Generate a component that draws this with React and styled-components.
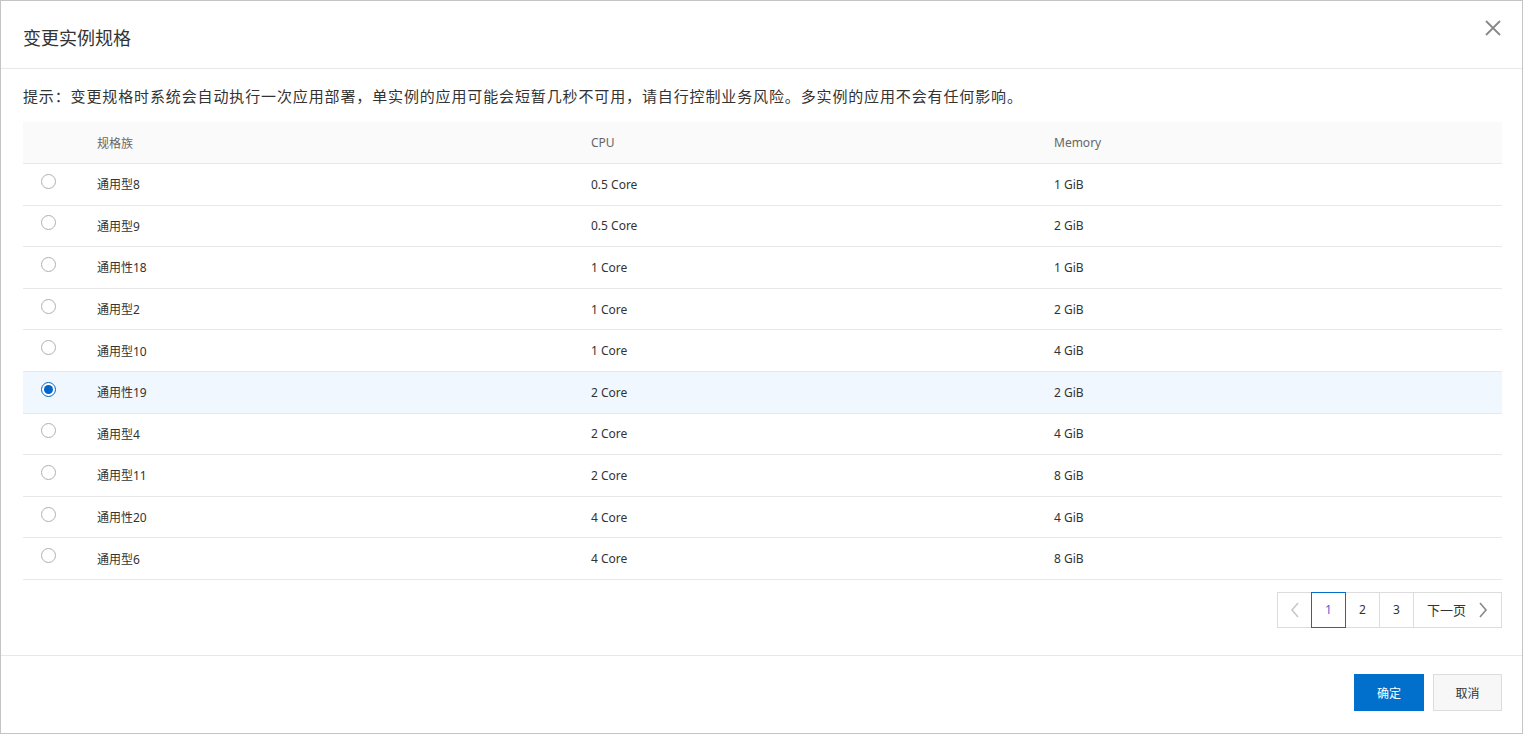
import React, { useState } from "react";
import styled, { createGlobalStyle } from "styled-components";

const Global = createGlobalStyle`
  html, body { margin: 0; padding: 0; background: #fff; }
  body { font-family: "Noto Sans", "Open Sans", "Noto Sans CJK SC", sans-serif; color: #333; }
  * { box-sizing: border-box; }
`;

const Dialog = styled.div`
  width: 1523px;
  height: 734px;
  border: 1px solid #c4c4c4;
  display: flex;
  flex-direction: column;
  background: #fff;
`;

const Header = styled.div`
  height: 68px;
  flex: none;
  display: flex;
  align-items: center;
  justify-content: space-between;
  padding: 0 20px 0 22px;
  border-bottom: 1px solid #e8e8e8;
`;

const Title = styled.h2`
  margin: 0;
  font-size: 18px;
  font-weight: 400;
  color: #333;
  font-family: "Noto Sans CJK SC", sans-serif;
  line-height: 24px;
  padding-top: 4px;
`;

const Close = styled.button`
  border: none;
  background: none;
  padding: 0;
  width: 20px;
  height: 20px;
  display: flex;
  align-items: center;
  justify-content: center;
  cursor: pointer;
  margin-top: -14px;
  margin-right: -1px;
`;

const Body = styled.div`
  flex: 1;
  padding: 0 20px 0 22px;
  display: flex;
  flex-direction: column;
`;

const Hint = styled.p`
  margin: 0;
  height: 53px;
  display: flex;
  align-items: center;
  font-family: "Noto Sans CJK SC", sans-serif;
  font-size: 15px;
  letter-spacing: 0.87px;
  color: #333;
`;

const Table = styled.div`
  display: flex;
  flex-direction: column;
`;

const Row = styled.div`
  display: grid;
  grid-template-columns: 58px 494px 463px 1fr;
  align-items: center;
  height: ${(p) => (p.$head ? "42px" : "41.6px")};
  border-bottom: 1px solid #e8e8e8;
  background: ${(p) => (p.$head ? "#fafafa" : p.$selected ? "#f0f7fe" : "#fff")};
`;

const Cell = styled.div`
  padding-left: ${(p) => (p.$radio ? "18px" : "16px")};
  font-size: 12px;
  color: ${(p) => (p.$head ? "#666" : "#333")};
  font-family: "Noto Sans", "Noto Sans CJK SC", sans-serif;
  display: flex;
  align-items: center;
  margin-top: ${(p) => (p.$radio ? "-6px" : "0")};
`;

const Radio = styled.span`
  width: 15px;
  height: 15px;
  border-radius: 50%;
  border: 1px solid ${(p) => (p.$checked ? "#0064c8" : "#b0b0b0")};
  display: flex;
  align-items: center;
  justify-content: center;
  background: #fff;
  &::after {
    content: "";
    width: 9px;
    height: 9px;
    border-radius: 50%;
    background: ${(p) => (p.$checked ? "#0064c8" : "transparent")};
  }
`;

const PagerWrap = styled.div`
  display: flex;
  justify-content: flex-end;
  margin-top: 12px;
`;

const PageBtn = styled.button`
  height: 36px;
  width: ${(p) => p.$w || "35px"};
  margin-left: -1px;
  border: 1px solid ${(p) => (p.$active ? "#0070cc" : "#dcdcdc")};
  position: relative;
  z-index: ${(p) => (p.$active ? 1 : 0)};
  background: #fff;
  color: ${(p) => (p.$active ? "#5b5bd6" : "#333")};
  font-size: 12px;
  font-family: "Noto Sans", "Noto Sans CJK SC", sans-serif;
  display: flex;
  align-items: center;
  justify-content: center;
  gap: 12px;
  padding: 0;
  cursor: pointer;
`;

const NextLabel = styled.span`
  font-size: 13px;
`;

const Footer = styled.div`
  height: 78px;
  flex: none;
  border-top: 1px solid #e8e8e8;
  display: flex;
  justify-content: flex-end;
  align-items: flex-start;
  gap: 9px;
  padding: 18px 20px 0 0;
`;

const Button = styled.button`
  height: 37px;
  width: ${(p) => (p.$primary ? "70px" : "69px")};
  border: 1px solid ${(p) => (p.$primary ? "#0070cc" : "#dcdcdc")};
  background: ${(p) => (p.$primary ? "#0070cc" : "#f7f7f7")};
  color: ${(p) => (p.$primary ? "#fff" : "#333")};
  font-size: 12px;
  font-family: "Noto Sans CJK SC", sans-serif;
  cursor: pointer;
  padding: 0;
`;

const data = [
  ["通用型8", "0.5 Core", "1 GiB"],
  ["通用型9", "0.5 Core", "2 GiB"],
  ["通用性18", "1 Core", "1 GiB"],
  ["通用型2", "1 Core", "2 GiB"],
  ["通用型10", "1 Core", "4 GiB"],
  ["通用性19", "2 Core", "2 GiB"],
  ["通用型4", "2 Core", "4 GiB"],
  ["通用型11", "2 Core", "8 GiB"],
  ["通用性20", "4 Core", "4 GiB"],
  ["通用型6", "4 Core", "8 GiB"],
];

const Chevron = ({ dir, color }) => (
  <svg width="10" height="16" viewBox="0 0 10 16" fill="none">
    <path
      d={dir === "left" ? "M8 1 L2 8 L8 15" : "M2 1 L8 8 L2 15"}
      stroke={color}
      strokeWidth="1.6"
    />
  </svg>
);

export default function App() {
  const [sel, setSel] = useState(5);
  return (
    <>
      <Global />
      <Dialog>
        <Header>
          <Title>变更实例规格</Title>
          <Close aria-label="close">
            <svg width="16" height="16" viewBox="0 0 16 16">
              <path d="M1 1 L15 15 M15 1 L1 15" stroke="#888" strokeWidth="1.8" />
            </svg>
          </Close>
        </Header>
        <Body>
          <Hint>提示：变更规格时系统会自动执行一次应用部署，单实例的应用可能会短暂几秒不可用，请自行控制业务风险。多实例的应用不会有任何影响。</Hint>
          <Table>
            <Row $head>
              <Cell $head />
              <Cell $head>规格族</Cell>
              <Cell $head>CPU</Cell>
              <Cell $head>Memory</Cell>
            </Row>
            {data.map((d, i) => (
              <Row key={i} $selected={i === sel} onClick={() => setSel(i)}>
                <Cell $radio>
                  <Radio $checked={i === sel} />
                </Cell>
                <Cell>{d[0]}</Cell>
                <Cell>{d[1]}</Cell>
                <Cell>{d[2]}</Cell>
              </Row>
            ))}
          </Table>
          <PagerWrap>
            <PageBtn $w="35px">
              <Chevron dir="left" color="#c8c8c8" />
            </PageBtn>
            <PageBtn $active>1</PageBtn>
            <PageBtn>2</PageBtn>
            <PageBtn>3</PageBtn>
            <PageBtn $w="89px">
              <NextLabel>下一页</NextLabel>
              <Chevron dir="right" color="#888" />
            </PageBtn>
          </PagerWrap>
        </Body>
        <Footer>
          <Button $primary>确定</Button>
          <Button>取消</Button>
        </Footer>
      </Dialog>
    </>
  );
}
